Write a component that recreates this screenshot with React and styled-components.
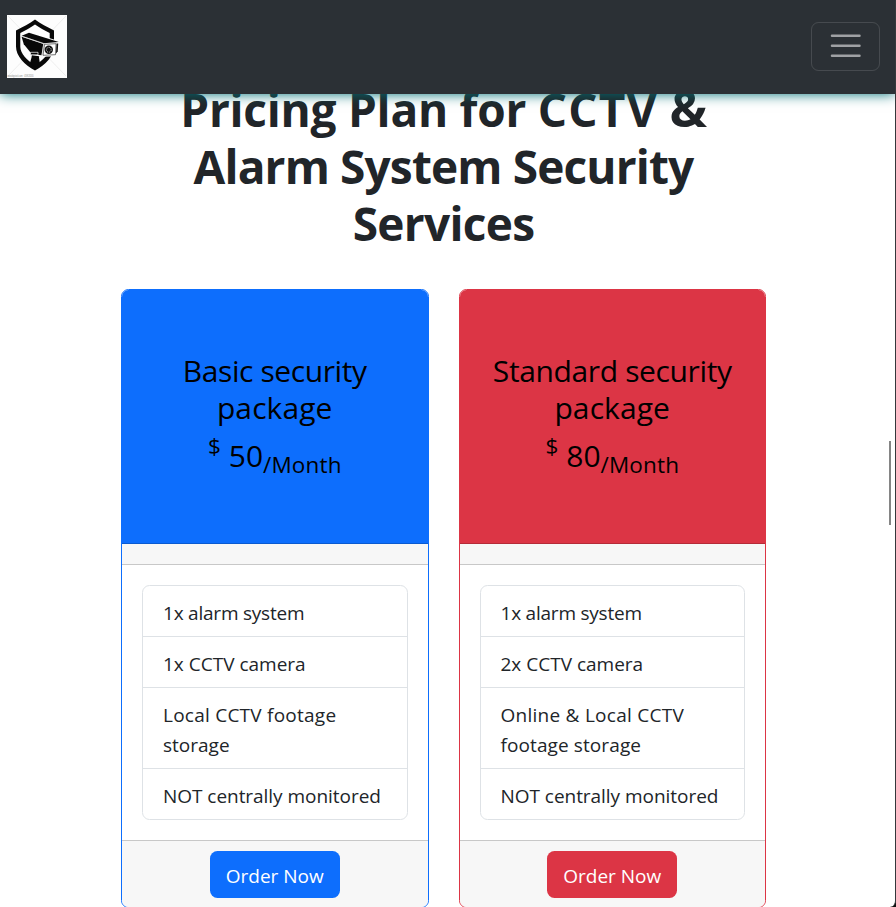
import React from "react";
import styled, { createGlobalStyle } from "styled-components";

const GlobalStyle = createGlobalStyle`
  *, *::before, *::after { box-sizing: border-box; }
  body {
    margin: 0;
    background: #101010;
    color: #212529;
    font-family: "Open Sans", "Noto Sans", sans-serif;
  }
`;

const Page = styled.div`
  height: 907px;
  overflow: hidden;
  background: #fff;
  border-right: 1px solid #35383b;
  border-bottom-right-radius: 6px;
  position: relative;
`;

const Navbar = styled.header`
  position: relative;
  z-index: 2;
  display: flex;
  align-items: center;
  justify-content: space-between;
  height: 94px;
  padding: 0 14.8px 0 7px;
  background: #2b3035;
  box-shadow: 0 0 12.5px 0 #027177;
`;

const Logo = styled.svg`
  display: block;
  width: 60px;
  height: 63px;
  margin-top: -1px;
`;

const Toggler = styled.button`
  width: 69.5px;
  height: 49.5px;
  margin-top: -1px;
  padding: 4.5px 15px 5.5px;
  border: 1px solid rgba(255, 255, 255, 0.13);
  border-radius: 7.5px;
  background: transparent;

  svg {
    display: block;
    width: 37.5px;
    height: 37.5px;
  }
`;

const Pricing = styled.main`
  width: 645px;
  margin: -13px 0 0 121px;
`;

const Title = styled.h1`
  margin: 0;
  font-size: 46px;
  line-height: 57px;
  font-weight: 700;
  text-align: center;
`;

const Line = styled.span`
  display: block;
  white-space: nowrap;
  letter-spacing: ${(p) => p.$tracking || 0}px;
`;

const Wide = styled.span`
  letter-spacing: 1.2px;
`;

const Ampersand = styled.span`
  font-size: 50px;
  line-height: 0;
`;

const Plans = styled.div`
  display: grid;
  grid-template-columns: 307.5px 307.5px;
  column-gap: 30px;
  margin-top: 37px;
`;

const Card = styled.article`
  height: 619px;
  overflow: hidden;
  display: flex;
  flex-direction: column;
  border: 1px solid ${(p) => p.$accent};
  border-radius: 7.5px;
`;

const CardHead = styled.div`
  height: 254px;
  padding-top: 61.5px;
  background: ${(p) => p.$accent};
  border-bottom: 1px solid rgba(0, 0, 0, 0.175);
  color: #000;
  font-size: 30px;
  line-height: 37.5px;
  text-align: center;
`;

const Price = styled.div`
  margin-top: 10px;
  height: 37.5px;
  white-space: nowrap;
`;

const Currency = styled.span`
  margin-right: 8px;
  font-size: 22.5px;
  line-height: 0;
  vertical-align: 13px;
`;

const Period = styled.span`
  font-size: 22.5px;
  line-height: 0;
  letter-spacing: 0.15px;
  vertical-align: -6px;
`;

const Divider = styled.div`
  height: 21px;
  background: #f7f7f7;
  border-bottom: 1px solid #c8c8c8;
`;

const CardBody = styled.div`
  padding: 20px;
`;

const Features = styled.ul`
  margin: 0;
  padding: 0;
  list-style: none;
  border: 1px solid #dee2e6;
  border-radius: 7.5px;
`;

const Feature = styled.li`
  padding: 12px 20px 8px;
  font-size: 19px;
  line-height: 30px;

  & + & {
    border-top: 1px solid #dee2e6;
  }
`;

const CardFoot = styled.div`
  flex: 1;
  display: flex;
  justify-content: center;
  align-items: flex-start;
  padding-top: 10px;
  background: #f7f7f7;
  border-top: 1px solid #c8c8c8;
`;

const OrderButton = styled.button`
  width: 130px;
  height: 47px;
  padding: 2px 0 0;
  border: 0;
  border-radius: 7.5px;
  background: ${(p) => p.$accent};
  color: #fff;
  font: 400 19px/30px "Open Sans", "Noto Sans", sans-serif;
`;

const ScrollThumb = styled.div`
  position: absolute;
  z-index: 3;
  top: 441px;
  right: 4px;
  width: 2px;
  height: 84px;
  background: #858585;
`;

const plans = [
  {
    accent: "#0d6efd",
    name: [["Basic security", -0.4], ["package", 0.1]],
    price: "50",
    features: [
      [["1x alarm system", -0.22]],
      [["1x CCTV camera", 0]],
      [["Local CCTV footage", 0.24], ["storage", 0]],
      [["NOT centrally monitored", -0.04]],
    ],
  },
  {
    accent: "#dc3545",
    name: [["Standard security", -0.37], ["package", 0.1]],
    price: "80",
    features: [
      [["1x alarm system", -0.22]],
      [["2x CCTV camera", 0]],
      [["Online & Local CCTV", 0.26], ["footage storage", 0.1]],
      [["NOT centrally monitored", -0.04]],
    ],
  },
];

const renderLines = (lines) =>
  lines.map(([text, tracking]) => (
    <Line key={text} $tracking={tracking}>{text}</Line>
  ));

function CameraLogo() {
  return (
    <Logo viewBox="0 0 60 63" aria-label="Security camera logo">
      <rect width="60" height="63" fill="#fdfdfd" />
      <path d="M1 1l58 60M59 1L1 61" stroke="#e3e3e3" strokeWidth=".6" />
      <path
        d="M28 4.5C33.5 8.5 40 12 47 15.500v16C47 41 38.500 50 28 55.500 17.500 50 9 41 9 31.500v-16C16 12 22.500 8.500 28 4.500z"
        fill="#080808"
      />
      <path
        d="M28 9.500C32.500 12.500 37.500 15.400 42.700 18v13.700C42.700 38.500 36 45.500 28 50 20 45.500 13.300 38.500 13.300 31.700V18C18.500 15.400 23.500 12.500 28 9.500z"
        fill="#fdfdfd"
      />
      <path d="M25 39.500h7.500l-.5 3 .8 5.500-4.800 4-5-4 1.500-5.500z" fill="#080808" />
      <path d="M13.500 19.800l8.500-3.100L52.500 26.300l-1.500 15-16 .5-10.800-1.800-9-11z" fill="#fdfdfd" />
      <path d="M14.700 20.700l7.300-3L51.800 27.100l-15.300 1.100z" fill="#080808" />
      <path d="M14.600 21.800L36.300 28.900 34.500 40.300l-9.700-1.400-8-9.600z" fill="#080808" />
      <path d="M14.700 21.200l22 7.200-1.700 12" fill="none" stroke="#cfcfcf" strokeWidth=".6" />
      <path d="M23.500 37.300h7.500v2.500h-7.500z" fill="#080808" stroke="#fdfdfd" strokeWidth=".7" />
      <path d="M37.500 29.300l11.500-.6-.5 11-12.500.6z" fill="#fdfdfd" stroke="#151515" strokeWidth=".6" />
      <path d="M49.500 28.500h1.700l-.5 8-1.700 2z" fill="#111" />
      <circle cx="41.800" cy="34.800" r="4.200" fill="#111" />
      <circle cx="41.800" cy="34.800" r="2.400" fill="none" stroke="#eee" strokeWidth=".8" strokeDasharray="1.100 .9" />
      <text x=".5" y="62" fontSize="2.600" fill="#888" fontFamily="Liberation Sans, sans-serif" textLength="26" lengthAdjust="spacingAndGlyphs">www.bigstock.com · 459828205</text>
    </Logo>
  );
}

export default function App() {
  return (
    <Page>
      <GlobalStyle />
      <Navbar>
        <CameraLogo />
        <Toggler aria-label="Toggle navigation">
          <svg viewBox="0 0 30 30" fill="none" stroke="rgba(255,255,255,.55)" strokeWidth="2" strokeLinecap="round">
            <path d="M4 7h22M4 15h22M4 23h22" />
          </svg>
        </Toggler>
      </Navbar>
      <Pricing>
        <Title>
          <Line $tracking={-0.25}>
            Pricing Plan for <Wide>CCTV</Wide> <Ampersand>&amp;</Ampersand>
          </Line>
          <Line $tracking={-0.85}>Alarm System Security</Line>
          <Line $tracking={-0.7}>Services</Line>
        </Title>
        <Plans>
          {plans.map((plan) => (
            <Card key={plan.price} $accent={plan.accent}>
              <CardHead $accent={plan.accent}>
                {renderLines(plan.name)}
                <Price>
                  <Currency>$</Currency>
                  {plan.price}
                  <Period>/Month</Period>
                </Price>
              </CardHead>
              <Divider />
              <CardBody>
                <Features>
                  {plan.features.map((lines) => (
                    <Feature key={lines[0][0]}>{renderLines(lines)}</Feature>
                  ))}
                </Features>
              </CardBody>
              <CardFoot>
                <OrderButton $accent={plan.accent}>Order Now</OrderButton>
              </CardFoot>
            </Card>
          ))}
        </Plans>
      </Pricing>
      <ScrollThumb />
    </Page>
  );
}
